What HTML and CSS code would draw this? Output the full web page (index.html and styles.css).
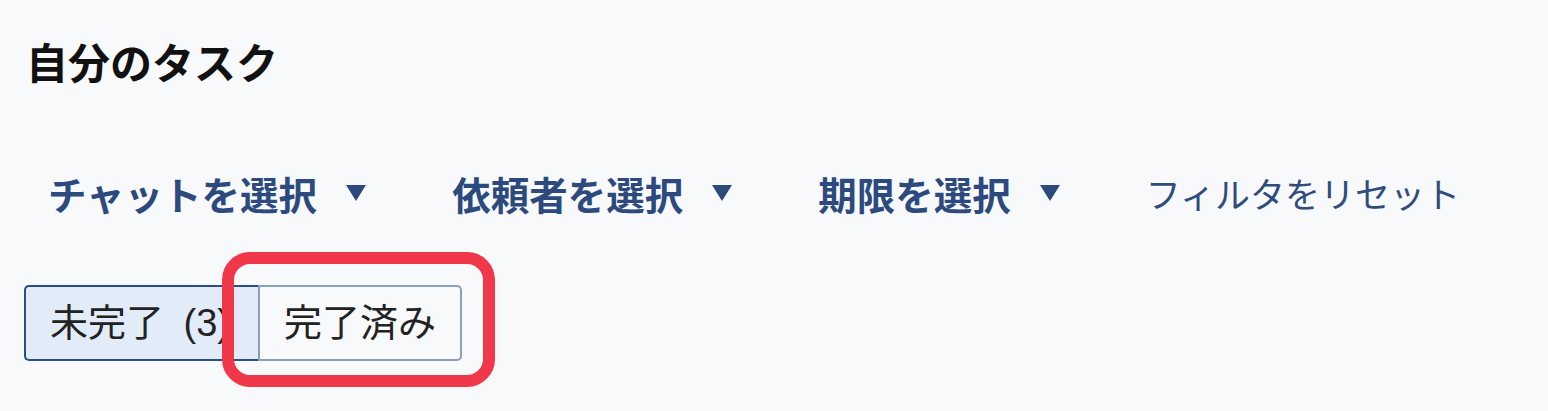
FILE: index.html
```html
<!DOCTYPE html>
<html lang="ja">
<head>
<meta charset="utf-8">
<title>自分のタスク</title>
<link rel="stylesheet" href="styles.css">
</head>
<body>
<div class="page">
  <h1 class="title">自分のタスク</h1>
  <div class="filters">
    <button class="filter">チャットを選択<svg class="caret" viewBox="0 0 20 16" width="20" height="16"><polygon points="0,0 20,0 10,16"/></svg></button>
    <button class="filter">依頼者を選択<svg class="caret" viewBox="0 0 20 16" width="20" height="16"><polygon points="0,0 20,0 10,16"/></svg></button>
    <button class="filter">期限を選択<svg class="caret" viewBox="0 0 20 16" width="20" height="16"><polygon points="0,0 20,0 10,16"/></svg></button>
    <button class="reset">フィルタをリセット</button>
  </div>
  <div class="tabs">
    <button class="tab tab-active">未完了 (3)</button>
    <button class="tab tab-done">完了済み</button>
  </div>
  <div class="highlight"></div>
</div>
</body>
</html>
```

FILE: styles.css
```css
html, body {
  margin: 0;
  padding: 0;
  background: #f8f9fb;
}
body {
  font-family: "Noto Sans CJK JP", "Noto Sans", sans-serif;
  color: #111;
}
.page {
  position: relative;
  padding: 33px 24px 0 24px;
  height: 378px;
}
.title {
  margin: 0;
  font-size: 42px;
  line-height: 56px;
  font-weight: 700;
  color: #111;
  padding-left: 2px;
}
.filters {
  display: flex;
  align-items: center;
  gap: 38px;
  margin-top: 76px;
  height: 56px;
}
.filter, .reset {
  font-family: inherit;
  background: none;
  border: none;
  padding: 0 24px;
  margin: 0;
  color: #2c4a7e;
  line-height: 56px;
  display: flex;
  align-items: center;
}
.filter {
  font-size: 38.5px;
  font-weight: 700;
}
.reset {
  font-size: 35px;
  font-weight: 400;
  color: #2f4c7c;
}
.caret {
  margin-left: 29px;
  fill: #2c4a7e;
  display: block;
}
.tabs {
  display: flex;
  margin-top: 64px;
}
.tab {
  font-family: "Liberation Sans", "Noto Sans CJK JP", sans-serif;
  font-size: 38px;
  line-height: 44px;
  padding: 14px 24px;
  margin: 0;
  color: #222;
  box-sizing: border-box;
}
.tab-active {
  background: #e2ebf8;
  border: 2px solid #2b4d8a;
  border-right: none;
  border-radius: 5px 0 0 5px;
  width: 234px;
  text-align: left;
  white-space: nowrap;
  word-spacing: 9px;
  overflow: hidden;
}
.tab-done {
  background: #f8f9fb;
  border: 2px solid #8b9fb8;
  border-radius: 0 5px 5px 0;
}
.highlight {
  position: absolute;
  left: 222px;
  top: 252px;
  width: 273px;
  height: 135px;
  box-sizing: border-box;
  border: 12px solid #f1374a;
  border-radius: 28px;
}
```
